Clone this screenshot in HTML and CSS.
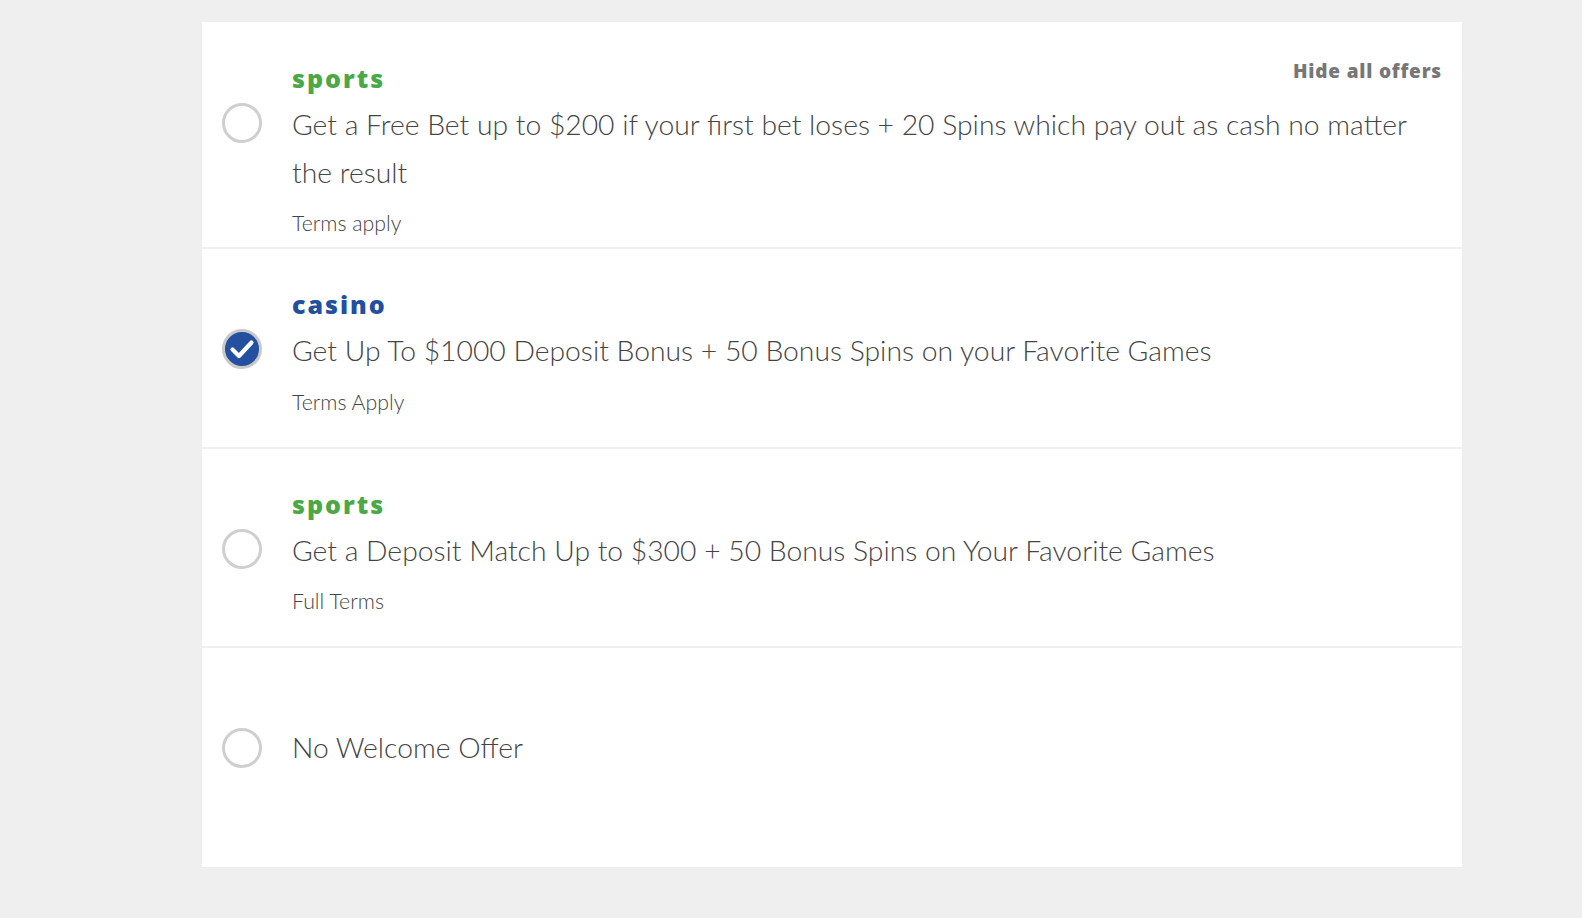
FILE: index.html
```html
<!DOCTYPE html>
<html lang="en">
<head>
    <meta charset="UTF-8">
    <meta name="viewport" content="width=device-width, initial-scale=1.0">
    <title>Welcome Offers</title>
    <link rel="stylesheet" href="styles.css">
</head>
<body>
    <div class="offers">
        <a class="hide-link" href="#">Hide all offers</a>

        <label class="offer offer-first">
            <span class="radio"></span>
            <span class="offer-body">
                <span class="offer-tag tag-sports">sports</span>
                <span class="offer-text">Get a Free Bet up to $200 if your first bet loses + 20 Spins which pay out as cash no matter the result</span>
                <span class="offer-terms">Terms apply</span>
            </span>
        </label>

        <label class="offer">
            <span class="radio checked">
                <svg viewBox="0 0 40 40" width="40" height="40">
                    <circle cx="20" cy="20" r="18.5" fill="#24509f" stroke="#c9c9c9" stroke-width="3"/>
                    <path d="M10.5 20.5 L17 27 L29.5 13.5" fill="none" stroke="#fff" stroke-width="4.2" stroke-linecap="round" stroke-linejoin="round"/>
                </svg>
            </span>
            <span class="offer-body">
                <span class="offer-tag tag-casino">casino</span>
                <span class="offer-text">Get Up To $1000 Deposit Bonus + 50 Bonus Spins on your Favorite Games</span>
                <span class="offer-terms">Terms Apply</span>
            </span>
        </label>

        <label class="offer">
            <span class="radio"></span>
            <span class="offer-body">
                <span class="offer-tag tag-sports">sports</span>
                <span class="offer-text">Get a Deposit Match Up to $300 + 50 Bonus Spins on Your Favorite Games</span>
                <span class="offer-terms">Full Terms</span>
            </span>
        </label>

        <label class="offer offer-none">
            <span class="radio"></span>
            <span class="offer-body">
                <span class="offer-text">No Welcome Offer</span>
            </span>
        </label>
    </div>
</body>
</html>
```

FILE: styles.css
```css
body {
    margin: 0;
    padding: 22px 0 0 202px;
    background-color: #efefef;
    font-family: Lato, "Open Sans", sans-serif;
    height: 100vh;
    box-sizing: border-box;
}

.offers {
    position: relative;
    width: 1260px;
    background: #fff;
}

.hide-link {
    position: absolute;
    top: 36px;
    right: 20px;
    font-family: "Open Sans", sans-serif;
    font-size: 19px;
    font-weight: 800;
    letter-spacing: 0.8px;
    color: #777;
    text-decoration: none;
    line-height: 26px;
}

.offer {
    display: flex;
    align-items: flex-start;
    padding: 38px 20px 30px 20px;
    border-bottom: 2px solid #efefef;
    cursor: pointer;
}

.offer-first {
    padding-top: 39px;
    padding-bottom: 9px;
}

.offer-none {
    border-bottom: none;
    padding-top: 76px;
    padding-bottom: 95px;
}

.radio {
    flex: none;
    width: 40px;
    height: 40px;
    margin-top: 42px;
    margin-right: 30px;
    box-sizing: border-box;
    border: 3px solid #cfcfcf;
    border-radius: 50%;
}

.radio.checked {
    border: none;
}

.radio svg {
    display: block;
}

.offer-none .radio {
    margin-top: 4px;
}

.offer-body {
    flex: 1;
    display: flex;
    flex-direction: column;
}

.offer-tag {
    font-family: "Open Sans", sans-serif;
    font-size: 25px;
    font-weight: 800;
    letter-spacing: 2px;
    line-height: 34px;
    margin-bottom: 6px;
}

.tag-sports {
    color: #4ba847;
}

.tag-casino {
    color: #22509f;
}

.offer-text {
    font-size: 28.3px;
    font-weight: 300;
    line-height: 47.5px;
    color: #444;
}

.offer-terms {
    margin-top: 12px;
    font-size: 21.3px;
    font-weight: 300;
    line-height: 30px;
    color: #444;
}
```
